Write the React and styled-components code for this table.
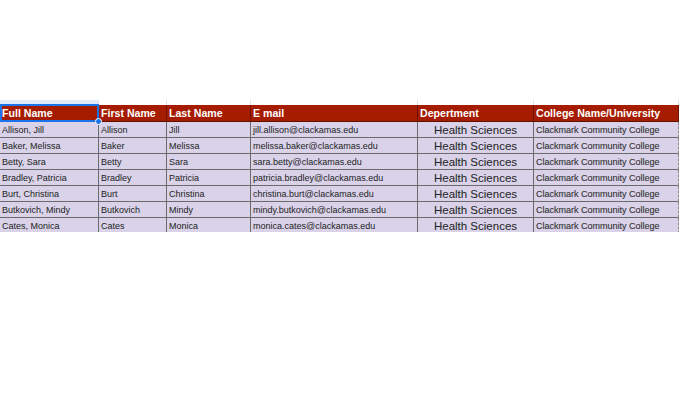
import React from "react";
import styled, { createGlobalStyle } from "styled-components";

const Global = createGlobalStyle`
  html, body { margin: 0; padding: 0; background: #ffffff; }
  body { font-family: "Liberation Sans", Arial, sans-serif; }
`;

const COLS = "99px 68px 84px 167px 116px 145px";

const Page = styled.div`
  width: 680px;
  height: 409px;
  padding-top: 100px;
  box-sizing: border-box;
  background: #ffffff;
`;

const Sheet = styled.div`
  position: relative;
  width: 679px;
  height: 132px;
  overflow: hidden;
`;

const Strip = styled.div`
  display: grid;
  grid-template-columns: ${COLS};
  height: 5px;
`;

const StripCell = styled.div`
  box-sizing: border-box;
  border-right: 1px solid #e3e3e3;
  background: ${(p) => (p.$active ? "#dfe9f8" : "#ffffff")};
`;

const Row = styled.div`
  display: grid;
  grid-template-columns: ${COLS};
  height: ${(p) => (p.$header ? "17px" : "16px")};
`;

const HeaderCell = styled.div`
  box-sizing: border-box;
  background: #a61c00;
  color: #ffffff;
  font-weight: bold;
  font-size: 10.6px;
  padding-left: 2px;
  display: flex;
  align-items: center;
  border-right: 1px solid #6e1500;
  border-bottom: 1px solid #5e1200;
  white-space: nowrap;
  overflow: hidden;
`;

const Cell = styled.div`
  box-sizing: border-box;
  background: #d9d2e9;
  color: ${(p) => (p.$variant === "college" ? "#333333" : "#222222")};
  font-size: ${(p) => (p.$variant === "dept" ? "11.5px" : "9px")};
  padding-left: ${(p) => (p.$variant === "dept" ? "0" : "2px")};
  padding-top: 1px;
  justify-content: ${(p) => (p.$variant === "dept" ? "center" : "flex-start")};
  -webkit-text-stroke: ${(p) => (p.$variant === "college" ? "0.12px #333" : "0")};
  display: flex;
  align-items: center;
  border-right: ${(p) => (p.$last ? "1px dashed #888" : "1px solid #6a6a6a")};
  border-bottom: 1px solid #6a6a6a;
  white-space: nowrap;
  overflow: hidden;
`;

const Selection = styled.div`
  position: absolute;
  left: 0;
  top: 4px;
  width: 99px;
  height: 18px;
  box-sizing: border-box;
  border: 2px solid #1a73e8;
  pointer-events: none;
`;

const Handle = styled.div`
  position: absolute;
  left: 95px;
  top: 18px;
  width: 7px;
  height: 7px;
  border-radius: 50%;
  background: #1a73e8;
  border: 1px solid #ffffff;
  box-sizing: border-box;
`;

const headers = [
  "Full Name",
  "First Name",
  "Last Name",
  "E mail",
  "Depertment",
  "College Name/University",
];

const people = [
  ["Allison", "Jill"],
  ["Baker", "Melissa"],
  ["Betty", "Sara"],
  ["Bradley", "Patricia"],
  ["Burt", "Christina"],
  ["Butkovich", "Mindy"],
  ["Cates", "Monica"],
];

export default function App() {
  return (
    <Page>
      <Global />
      <Sheet>
        <Strip>
          {headers.map((h, i) => (
            <StripCell key={h} $active={i === 0} />
          ))}
        </Strip>
        <Row $header>
          {headers.map((h) => (
            <HeaderCell key={h}>{h}</HeaderCell>
          ))}
        </Row>
        {people.map(([last, first]) => (
          <Row key={last}>
            <Cell>{`${last}, ${first}`}</Cell>
            <Cell>{last}</Cell>
            <Cell>{first}</Cell>
            <Cell>{`${first.toLowerCase()}.${last.toLowerCase()}@clackamas.edu`}</Cell>
            <Cell $variant="dept">Health Sciences</Cell>
            <Cell $variant="college" $last>
              Clackmark Community College
            </Cell>
          </Row>
        ))}
        <Selection />
        <Handle />
      </Sheet>
    </Page>
  );
}
